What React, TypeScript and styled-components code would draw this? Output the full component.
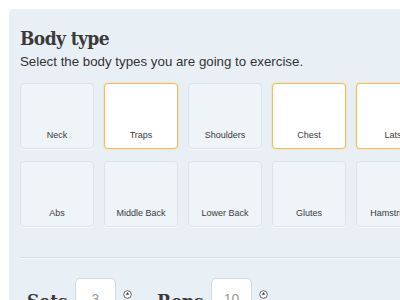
import React from "react";
import styled, { createGlobalStyle } from "styled-components";

const Global = createGlobalStyle`
  html, body { margin: 0; padding: 0; background: #ffffff; overflow: hidden; }
  body { width: 400px; height: 300px; }
`;

const Panel = styled.section`
  margin: 9px 0 0 9px;
  width: 520px;
  height: 400px;
  box-sizing: border-box;
  padding: 18px 0 0 11px;
  background: #e9f0f5;
  border-top-left-radius: 3px;
`;

const Title = styled.h1`
  margin: 0;
  font-family: "DejaVu Serif", serif;
  font-stretch: condensed;
  font-weight: bold;
  font-size: 19px;
  line-height: 22px;
  color: #3a3a3a;
  letter-spacing: -0.6px;
`;

const Subtitle = styled.p`
  margin: 5px 0 0 0;
  font-family: "Liberation Sans", Arial, sans-serif;
  font-size: 13.3px;
  line-height: 16px;
  color: #333;
`;

const Grid = styled.div`
  margin-top: 13px;
  display: grid;
  grid-template-columns: repeat(6, 74px);
  column-gap: 10px;
  row-gap: 12px;
`;

const Tile = styled.div<{ $selected?: boolean }>`
  box-sizing: border-box;
  height: 66px;
  border-radius: 4px;
  display: flex;
  align-items: flex-end;
  justify-content: center;
  padding-bottom: 8px;
  font-family: "Liberation Sans", Arial, sans-serif;
  font-size: 9px;
  color: #3a3a3a;
  background: ${(p) => (p.$selected ? "#ffffff" : "#eff4f9")};
  border: 1px solid ${(p) => (p.$selected ? "#f0bf5c" : "#dbe3eb")};
  box-shadow: ${(p) =>
    p.$selected ? "0 0 2px rgba(245, 185, 70, 0.7)" : "0 1px 0 rgba(255,255,255,0.6)"};
`;

const Divider = styled.hr`
  margin: 30px 0 0 0;
  border: 0;
  border-top: 1px solid #d8e1e9;
  border-bottom: 1px solid #f3f7fa;
  width: 500px;
`;

const FieldRow = styled.div`
  display: flex;
  align-items: flex-start;
  margin-top: 19px;
  padding-left: 7px;
`;

const Field = styled.div`
  display: flex;
  align-items: flex-start;
  margin-right: 25px;
`;

const FieldLabel = styled.span<{ $w: number }>`
  font-family: "DejaVu Serif", serif;
  font-stretch: condensed;
  font-weight: bold;
  font-size: 19px;
  color: #3a3a3a;
  margin-top: 12px;
  width: ${(p) => p.$w}px;
`;

const NumberBox = styled.div`
  box-sizing: border-box;
  width: 41px;
  height: 32px;
  background: #fff;
  border: 1px solid #d3dae1;
  border-radius: 5px;
  display: flex;
  justify-content: center;
  padding-top: 12px;
  font-family: "Liberation Sans", Arial, sans-serif;
  font-size: 14px;
  color: #999;
`;

const Spin = styled.svg`
  margin: 12px 0 0 7px;
`;

const Spinner = () => (
  <Spin width="9" height="9" viewBox="0 0 9 9">
    <circle cx="4.5" cy="4.5" r="3.8" fill="#fff" stroke="#555" strokeWidth="0.9" />
    <path d="M4.5 2.2 L6.3 4.8 H2.7 Z" fill="#333" />
  </Spin>
);

const parts = [
  { name: "Neck", sel: false },
  { name: "Traps", sel: true },
  { name: "Shoulders", sel: false },
  { name: "Chest", sel: true },
  { name: "Lats", sel: true },
  { name: "Biceps", sel: false },
  { name: "Abs", sel: false },
  { name: "Middle Back", sel: false },
  { name: "Lower Back", sel: false },
  { name: "Glutes", sel: false },
  { name: "Hamstrings", sel: false },
  { name: "Calves", sel: false },
];

export default function App() {
  return (
    <>
      <Global />
      <Panel>
        <Title>Body type</Title>
        <Subtitle>Select the body types you are going to exercise.</Subtitle>
        <Grid>
          {parts.map((p) => (
            <Tile key={p.name} $selected={p.sel}>
              {p.name}
            </Tile>
          ))}
        </Grid>
        <Divider />
        <FieldRow>
          <Field>
            <FieldLabel $w={48}>Sets</FieldLabel>
            <NumberBox>3</NumberBox>
            <Spinner />
          </Field>
          <Field>
            <FieldLabel $w={54}>Reps</FieldLabel>
            <NumberBox>10</NumberBox>
            <Spinner />
          </Field>
        </FieldRow>
      </Panel>
    </>
  );
}
